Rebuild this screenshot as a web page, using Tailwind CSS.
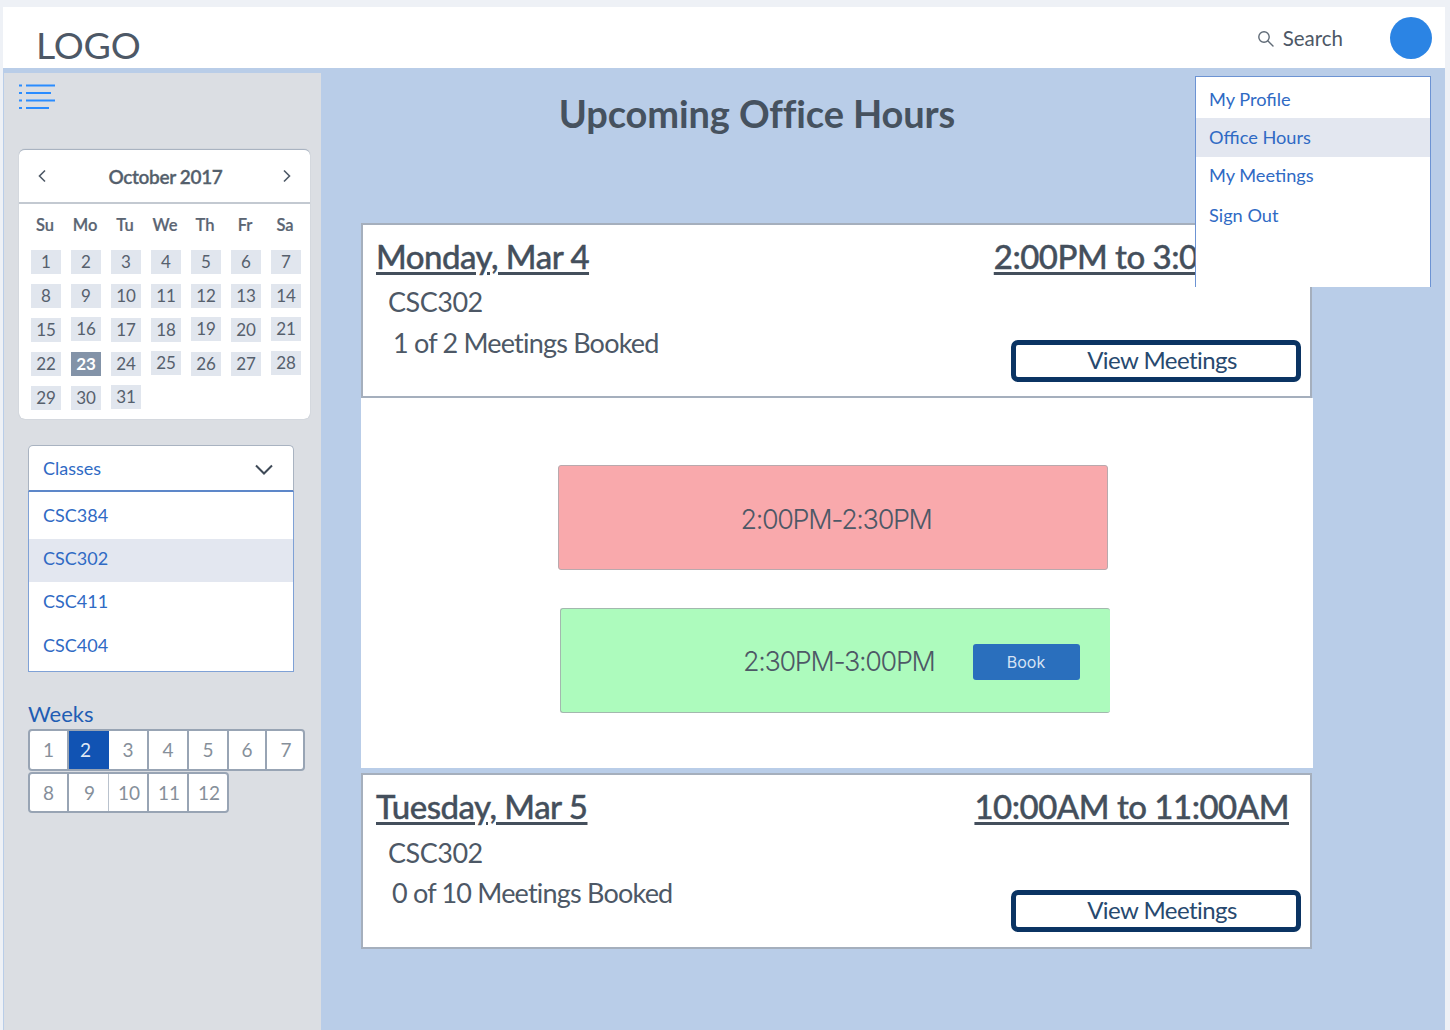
<!DOCTYPE html>
<html lang="en">
<head>
  <meta charset="UTF-8" />
  <title>Upcoming Office Hours</title>
  <script src="https://cdn.jsdelivr.net/npm/@tailwindcss/browser@4"></script>
</head>
<body class="bg-[#eef1f6] h-[1030px] overflow-hidden font-['Lato',sans-serif] text-[#4d5866]">
  <div class="relative ml-[3px] w-[1442px] pt-[7px] h-[1030px] flex flex-col">
    <!-- top bar -->
    <header class="h-[61px] shrink-0 bg-white flex items-center pl-[33px] pr-[13px]">
      <div class="text-[37.5px] leading-none mt-[15px] tracking-[-0.2px]">LOGO</div>
      <div class="ml-auto flex items-center mt-[1px]">
        <svg class="w-[17px] h-[17px] text-[#5f6a76]" viewBox="0 0 17 17" fill="none" stroke="currentColor" stroke-width="1.4"><circle cx="7" cy="7" r="5.2"/><path d="M11 11l5 5" stroke-linecap="round"/></svg>
        <span class="ml-[9px] text-[20.5px] leading-none">Search</span>
      </div>
      <div class="ml-[47px] w-[42px] h-[42px] rounded-full bg-[#2b84e4]"></div>
    </header>

    <div class="flex-1 flex bg-[#b9cde8] min-h-0">
      <!-- sidebar -->
      <aside class="w-[317px] shrink-0 mt-[5px] ml-[1px] bg-[#dbdee3] pl-[15px]">
        <svg class="mt-[10px] w-[37px] h-[27px] text-[#2a8cff]" viewBox="0 0 37 27" stroke="currentColor" stroke-width="2.2" fill="none">
          <path d="M0 2.5h3M7 2.5h29M0 10h3M7 10h25M0 17.5h3M7 17.5h29M0 25h3M7 25h23"/>
        </svg>

        <!-- calendar -->
        <section class="mt-[39px] w-[291px] h-[270px] bg-white rounded-[6px] border-t border-[#a9b3c1] shadow-[0_0_1px_#9aa5b3]">
          <div class="h-[54px] flex items-center justify-between px-[18px] border-b-2 border-[#c3c9d1]">
            <svg class="w-[10px] h-[14px]" viewBox="0 0 10 14" fill="none" stroke="#4d5866" stroke-width="1.6"><path d="M8 1.5L2.5 7 8 12.5"/></svg>
            <span class="text-[19px] mt-[2px] ml-[2px] font-semibold tracking-[-0.35px] text-[#545f6c] [-webkit-text-stroke:0.3px]">October 2017</span>
            <svg class="w-[10px] h-[14px]" viewBox="0 0 10 14" fill="none" stroke="#4d5866" stroke-width="1.6"><path d="M2 1.5L7.5 7 2 12.5"/></svg>
          </div>
          <div class="grid grid-cols-[repeat(7,30px)] gap-x-[10px] pl-[11px] pt-[11px] text-[16.5px] font-semibold text-[#5b6573] text-center leading-[20px] [-webkit-text-stroke:0.2px]">
            <span>Su</span><span>Mo</span><span>Tu</span><span>We</span><span>Th</span><span>Fr</span><span>Sa</span>
          </div>
          <div class="grid grid-cols-[repeat(7,30px)] auto-rows-[24px] gap-x-[10px] gap-y-[10px] pl-[12px] pt-[15px] text-[17px] text-center leading-[24px] text-[#56606d]">
            <span class="bg-[#e1e6ee]">1</span><span class="bg-[#e1e6ee]">2</span><span class="bg-[#e1e6ee]">3</span><span class="bg-[#e1e6ee]">4</span><span class="bg-[#e1e6ee]">5</span><span class="bg-[#e1e6ee]">6</span><span class="bg-[#e1e6ee]">7</span>
            <span class="bg-[#e1e6ee]">8</span><span class="bg-[#e1e6ee]">9</span><span class="bg-[#e1e6ee]">10</span><span class="bg-[#e1e6ee]">11</span><span class="bg-[#e1e6ee]">12</span><span class="bg-[#e1e6ee]">13</span><span class="bg-[#e1e6ee]">14</span>
            <span class="bg-[#e1e6ee]">15</span><span class="bg-[#e1e6ee] -translate-y-px">16</span><span class="bg-[#e1e6ee]">17</span><span class="bg-[#e1e6ee]">18</span><span class="bg-[#e1e6ee] -translate-y-px">19</span><span class="bg-[#e1e6ee]">20</span><span class="bg-[#e1e6ee] -translate-y-px">21</span>
            <span class="bg-[#e1e6ee]">22</span><span class="bg-[#8393a8] text-white font-bold">23</span><span class="bg-[#e1e6ee]">24</span><span class="bg-[#e1e6ee] -translate-y-px">25</span><span class="bg-[#e1e6ee]">26</span><span class="bg-[#e1e6ee]">27</span><span class="bg-[#e1e6ee] -translate-y-px">28</span>
            <span class="bg-[#e1e6ee]">29</span><span class="bg-[#e1e6ee]">30</span><span class="bg-[#e1e6ee] -translate-y-px">31</span>
          </div>
        </section>

        <!-- classes select -->
        <section class="mt-[26px] ml-[9px] w-[266px] text-[18px] text-[#2f6ac4]">
          <div class="h-[47px] bg-white rounded-t-[5px] border border-[#a9b3c1] border-b-2 border-b-[#5d87c9] flex items-center justify-between pl-[14px] pr-[20px]">
            <span>Classes</span>
            <svg class="w-[18px] h-[11px] mt-[3px]" viewBox="0 0 18 11" fill="none" stroke="#3f4a57" stroke-width="2"><path d="M1 1.5l8 8 8-8"/></svg>
          </div>
          <ul class="bg-white h-[180px] border-x border-b border-[#7fa1d6]">
            <li class="h-[47px] leading-[47px] pl-[14px]">CSC384</li>
            <li class="h-[43px] leading-[39px] pl-[14px] bg-[#e3e7f0]">CSC302</li>
            <li class="h-[43px] leading-[39px] pl-[14px]">CSC411</li>
            <li class="h-[45px] leading-[41px] pl-[14px]">CSC404</li>
          </ul>
        </section>

        <!-- weeks -->
        <section class="mt-[29px] ml-[9px]">
          <h3 class="text-[22px] leading-[26px] text-[#1f5db4]">Weeks</h3>
          <div class="mt-[2px] flex w-[277px] h-[42px] text-[19px] text-[#868f9a] leading-[38px] text-center bg-white border-2 border-[#98a4b4] rounded-[4px]">
            <span class="w-[39px] border-r-2 border-[#98a4b4]">1</span>
            <span class="w-[40px] bg-[#1153b3] text-[#dfe8f5] pr-[7px]">2</span>
            <span class="w-[40px] border-r-2 border-[#98a4b4]">3</span>
            <span class="w-[40px] border-r-2 border-[#98a4b4]">4</span>
            <span class="w-[40px] border-r-2 border-[#98a4b4]">5</span>
            <span class="w-[38px] border-r-2 border-[#98a4b4]">6</span>
            <span class="flex-1 pl-[2px]">7</span>
          </div>
          <div class="mt-[1px] flex w-[201px] h-[41px] text-[19px] text-[#868f9a] leading-[37px] text-center bg-white border-2 border-[#98a4b4] rounded-[4px]">
            <span class="w-[39px] border-r-2 border-[#98a4b4]">8</span>
            <span class="w-[40px] border-r border-[#b9c2cd] pl-[2px]">9</span>
            <span class="w-[40px] border-r-2 border-[#98a4b4] pl-[2px]">10</span>
            <span class="w-[40px] border-r-2 border-[#98a4b4] pl-[2px]">11</span>
            <span class="flex-1 pl-[2px]">12</span>
          </div>
        </section>
      </aside>

      <!-- main column -->
      <main class="flex-1 min-w-0 pl-[40px]">
        <h1 class="w-[792px] text-center mt-[21px] text-[38px] leading-[48px] font-bold text-[#46525f] tracking-[-0.12px]">Upcoming Office Hours</h1>

        <article class="mt-[86px] w-[951px] h-[175px] bg-white border-2 border-[#a5afbd] pl-[13px] pt-[11px]">
          <div class="flex justify-between pr-[44px] text-[33px] leading-[40px] font-medium tracking-[-0.5px] text-[#444f5c] underline underline-offset-[3px] [-webkit-text-stroke:0.4px]">
            <span>Monday, Mar 4</span><span>2:00PM to 3:00PM</span>
          </div>
          <p class="ml-[12px] mt-[9px] text-[27px] leading-[34px] tracking-[-0.5px]">CSC302</p>
          <div class="flex">
            <p class="ml-[17px] mt-[7px] text-[27px] leading-[34px] tracking-[-0.8px]">1 of 2 Meetings Booked</p>
            <button class="ml-auto mr-[9px] mt-[21px] w-[290px] h-[42px] pl-[12px] pb-[2px] border-[5px] border-[#0b3463] rounded-[7px] text-[24px] leading-[28px] tracking-[-0.55px] text-[#27496f]">View Meetings</button>
          </div>
        </article>

        <section class="w-[952px] h-[370px] bg-white pt-[67px] pl-[197px]">
          <div class="w-[550px] h-[105px] bg-[#f9a9ac] border border-[#b9a9ad] rounded-[3px] flex items-center justify-center pl-[6px] text-[27px] font-['Inter',sans-serif] font-light tracking-[-1.35px]"><span class="mt-[6px]">2:00PM-2:30PM</span></div>
          <div class="mt-[38px] ml-[2px] w-[550px] h-[105px] bg-[#adfbbd] border border-[#a3b8ae] border-r-0 rounded-[3px] flex items-center pl-[182px] text-[27px] font-['Inter',sans-serif] font-light tracking-[-1.35px]">
            <span class="mt-[4px]">2:30PM-3:00PM</span>
            <button class="ml-auto mr-[30px] mt-[2px] w-[107px] h-[36px] bg-[#2a6fbd] rounded-[3px] text-[16px] font-normal tracking-normal leading-none text-[#d5e2f4] pr-[1px]">Book</button>
          </div>
        </section>

        <article class="mt-[5px] w-[951px] h-[176px] bg-white border-2 border-[#a5afbd] pl-[13px] pt-[11px]">
          <div class="flex justify-between pr-[21px] text-[33px] leading-[40px] font-medium tracking-[-0.5px] text-[#444f5c] underline underline-offset-[3px] [-webkit-text-stroke:0.4px]">
            <span>Tuesday, Mar 5</span><span>10:00AM to 11:00AM</span>
          </div>
          <p class="ml-[12px] mt-[10px] text-[27px] leading-[34px] tracking-[-0.5px]">CSC302</p>
          <div class="flex">
            <p class="ml-[16px] mt-[6px] text-[27px] leading-[34px] tracking-[-0.8px]">0 of 10 Meetings Booked</p>
            <button class="ml-auto mr-[9px] mt-[20px] w-[290px] h-[42px] pl-[12px] pb-[2px] border-[5px] border-[#0b3463] rounded-[7px] text-[24px] leading-[28px] tracking-[-0.55px] text-[#27496f]">View Meetings</button>
          </div>
        </article>
      </main>
    </div>

    <!-- profile menu, sits over the first card -->
    <nav class="absolute left-[1192px] top-[76px] w-[236px] h-[211px] bg-white border-x border-t border-[#6c93d3] text-[18.2px] text-[#2f6ac4]">
      <div class="h-[41px] leading-[44px] pl-[13px]">My Profile</div>
      <div class="h-[39px] leading-[39px] pl-[13px] bg-[#e3e7f0]">Office Hours</div>
      <div class="h-[38px] leading-[37px] pl-[13px]">My Meetings</div>
      <div class="h-[40px] leading-[41px] pl-[13px]">Sign Out</div>
    </nav>
  </div>
</body>
</html>
